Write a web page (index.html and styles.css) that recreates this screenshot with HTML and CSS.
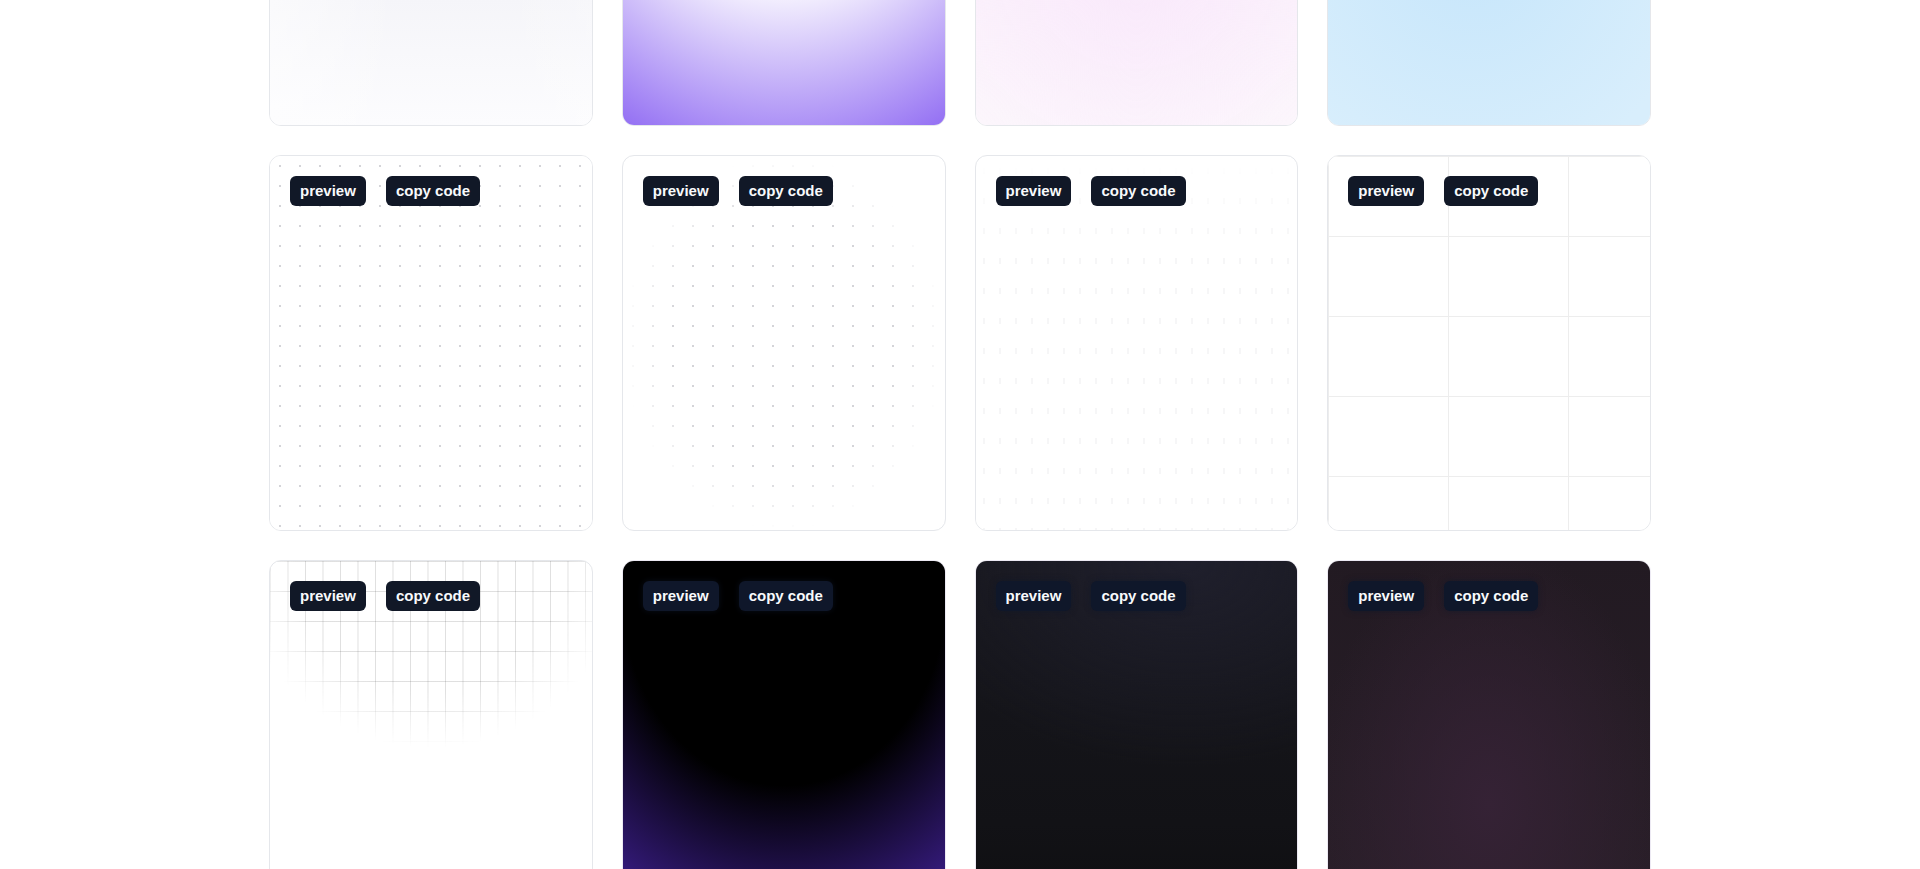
FILE: index.html
```html
<!DOCTYPE html>
<html lang="en">
<head>
<meta charset="utf-8">
<title>Backgrounds</title>
<link rel="stylesheet" href="styles.css">
</head>
<body>
<main class="grid">
  <div class="card"><div class="bg bg-soft"></div></div>
  <div class="card"><div class="bg bg-violet"></div></div>
  <div class="card"><div class="bg bg-pink"></div></div>
  <div class="card"><div class="bg bg-sky"></div></div>

  <div class="card"><div class="bg bg-dots"></div><div class="actions"><button class="btn">preview</button><button class="btn">copy code</button></div></div>
  <div class="card"><div class="bg bg-dots bg-dots-fade"></div><div class="actions"><button class="btn">preview</button><button class="btn">copy code</button></div></div>
  <div class="card"><div class="bg bg-faint"></div><div class="actions"><button class="btn">preview</button><button class="btn">copy code</button></div></div>
  <div class="card"><div class="bg bg-big-grid"></div><div class="actions"><button class="btn">preview</button><button class="btn">copy code</button></div></div>

  <div class="card"><div class="bg bg-fine-grid"></div><div class="actions"><button class="btn">preview</button><button class="btn">copy code</button></div></div>
  <div class="card card-dark"><div class="bg bg-night-violet"></div><div class="actions"><button class="btn btn-dark">preview</button><button class="btn btn-dark">copy code</button></div></div>
  <div class="card card-dark"><div class="bg bg-slate"></div><div class="actions"><button class="btn btn-dark">preview</button><button class="btn btn-dark">copy code</button></div></div>
  <div class="card card-dark"><div class="bg bg-plum"></div><div class="actions"><button class="btn btn-dark">preview</button><button class="btn btn-dark">copy code</button></div></div>
</main>
</body>
</html>
```
FILE: styles.css
```css
html, body {
  margin: 0;
  padding: 0;
  background: #ffffff;
  overflow: hidden;
}

.grid {
  display: grid;
  grid-template-columns: repeat(4, 1fr);
  grid-auto-rows: 376px;
  gap: 29px;
  width: 1382px;
  margin: -250px auto 0;
}

.card {
  position: relative;
  box-sizing: border-box;
  border: 1px solid #e5e7eb;
  border-radius: 12px;
  overflow: hidden;
  background: #ffffff;
}

.card-dark {
  border-color: #ece9f3;
}

.bg {
  position: absolute;
  inset: 0;
}

.actions {
  position: relative;
  display: flex;
  gap: 20px;
  padding: 20px;
}

.btn {
  font: 700 15px/18px "Liberation Sans", Arial, sans-serif;
  color: #f8fafc;
  background: #111827;
  border: 0;
  border-radius: 6px;
  padding: 6px 10px;
  margin: 0;
  cursor: pointer;
}

.btn-dark {
  background: #0f172a;
  box-shadow: 0 0 6px rgba(15, 23, 42, 0.6);
}

/* row 1 */
.bg-soft {
  background:
    linear-gradient(to right, rgba(255,255,255,0.5), rgba(255,255,255,0) 40%, rgba(255,255,255,0) 70%, rgba(255,255,255,0.2)),
    linear-gradient(to bottom, #ebebf3 0%, #f5f5f9 66%, #fcfcfe 100%);
}

.bg-violet {
  background: radial-gradient(125% 125% at 50% 10%, #ffffff 40%, #6633ee 100%);
}

.bg-pink {
  background:
    radial-gradient(ellipse 70% 60% at 50% 55%, #f9e8fb 0%, rgba(249,232,251,0) 100%),
    linear-gradient(to bottom, #faedfb, #fcf6fc);
}

.bg-sky {
  background:
    radial-gradient(ellipse 70% 60% at 45% 55%, #c7e6fb 0%, rgba(199,230,251,0) 100%),
    #d8eefc;
}

/* row 2 */
.bg-dots {
  background-color: #ffffff;
  background-image: radial-gradient(#d4d4d8 1.25px, transparent 1.25px);
  background-size: 20px 20px;
}

.bg-dots-fade {
  -webkit-mask-image: radial-gradient(ellipse 50% 50% at 50% 50%, #000 70%, transparent 100%);
  mask-image: radial-gradient(ellipse 50% 50% at 50% 50%, #000 70%, transparent 100%);
}

.bg-faint {
  background-color: #ffffff;
  background-image: radial-gradient(#f6f6f7 1.5px, transparent 1.5px);
  background-size: 16px 30px;
  -webkit-mask-image: linear-gradient(to bottom, transparent 0%, #000 25%, #000 100%);
  mask-image: linear-gradient(to bottom, transparent 0%, #000 25%, #000 100%);
}

.bg-big-grid {
  background-color: #ffffff;
  background-image:
    linear-gradient(to right, #ededed 1px, transparent 1px),
    linear-gradient(to bottom, #ededed 1px, transparent 1px);
  background-size: 120px 80px;
}

/* row 3 */
.bg-fine-grid {
  background-image:
    linear-gradient(to right, rgba(79,79,79,0.18) 1px, transparent 1px),
    linear-gradient(to bottom, rgba(79,79,79,0.18) 1px, transparent 1px);
  background-size: 17.5px 30px;
  -webkit-mask-image: radial-gradient(ellipse 60% 50% at 50% 0%, #000 70%, transparent 100%);
  mask-image: radial-gradient(ellipse 60% 50% at 50% 0%, #000 70%, transparent 100%);
}

.bg-night-violet {
  background: radial-gradient(125% 125% at 50% 10%, #000000 40%, #6633ee 100%);
}

.bg-slate {
  background:
    radial-gradient(ellipse 90% 55% at 65% 0%, rgba(32,32,46,0.9) 0%, rgba(32,32,46,0) 100%),
    linear-gradient(to bottom, #17171d 0%, #121216 70%, #0e0e10 100%);
}

.bg-plum {
  background:
    radial-gradient(ellipse 55% 70% at 50% 65%, #352235 0%, rgba(53,34,53,0) 100%),
    linear-gradient(to bottom, #221a22, #2a1f29);
}
```
